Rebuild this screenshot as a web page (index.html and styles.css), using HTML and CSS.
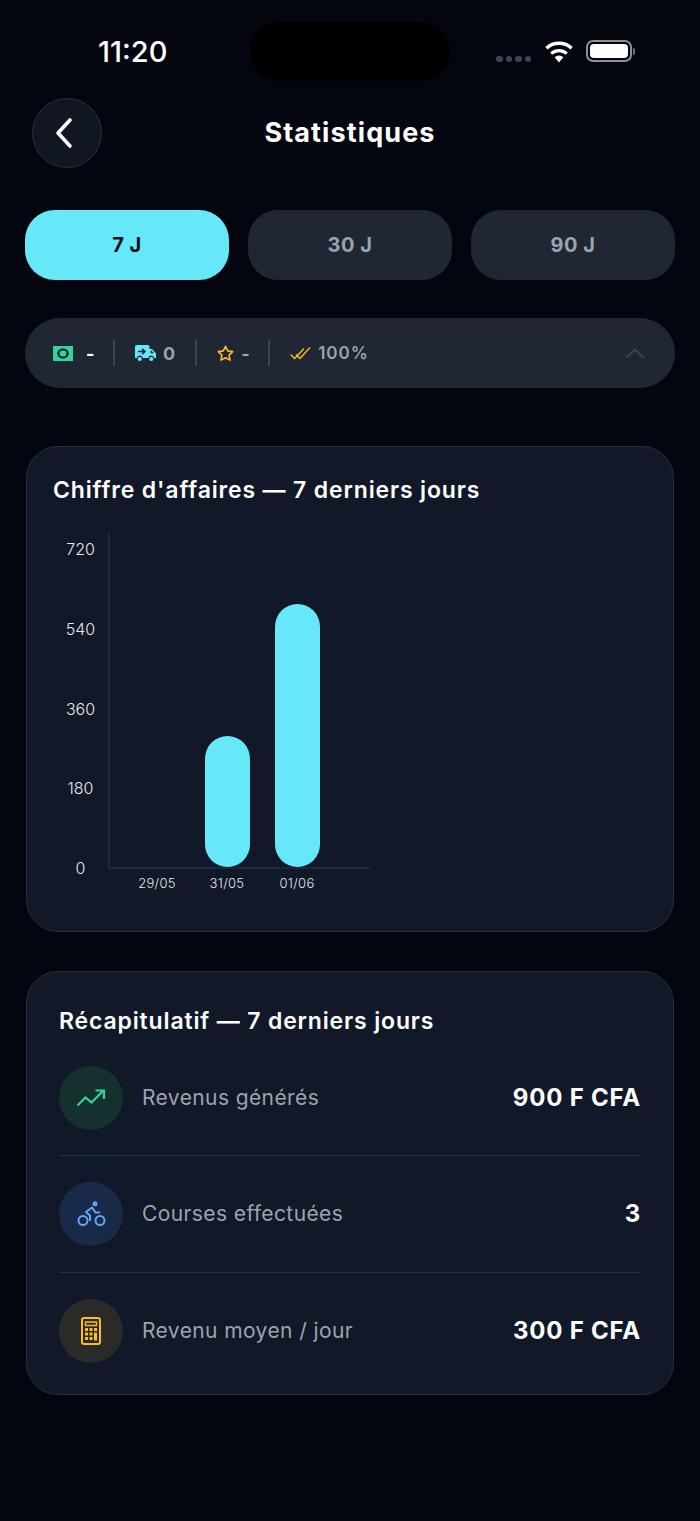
FILE: index.html
```html
<!DOCTYPE html>
<html lang="fr">
<head>
    <meta charset="UTF-8">
    <meta name="viewport" content="width=device-width, initial-scale=1.0">
    <title>Statistiques</title>
    <link rel="stylesheet" href="styles.css">
</head>
<body>
    <div class="status-bar">
        <span class="status-time">11:20</span>
        <div class="status-island"></div>
        <div class="status-icons">
            <div class="signal-dots"><i></i><i></i><i></i><i></i></div>
            <svg class="wifi" width="30" height="23" viewBox="0 0 30 23">
                <path d="M15 22.5 10.6 17.3a6.6 6.6 0 0 1 8.8 0Z" fill="#fff"/>
                <path d="M7.2 13.6a11.6 11.6 0 0 1 15.6 0" fill="none" stroke="#fff" stroke-width="3.2"/>
                <path d="M2.4 8.2a18.6 18.6 0 0 1 25.2 0" fill="none" stroke="#fff" stroke-width="3.4"/>
            </svg>
            <div class="battery"><div class="battery-fill"></div></div>
            <div class="battery-cap"></div>
        </div>
    </div>

    <div class="header">
        <button class="back-btn">
            <svg width="24" height="34" viewBox="0 0 24 34"><path d="M17 4 5 17l12 13" fill="none" stroke="#fff" stroke-width="3.6" stroke-linecap="round" stroke-linejoin="round"/></svg>
        </button>
        <h1>Statistiques</h1>
    </div>

    <div class="tabs">
        <div class="tab active">7 J</div>
        <div class="tab">30 J</div>
        <div class="tab">90 J</div>
    </div>

    <div class="summary">
        <div class="summary-item money">
            <svg width="20" height="15" viewBox="0 0 20 15"><path fill-rule="evenodd" d="M0 0h20v15H0Zm10 2.500c-3 0-5.800 2.200-5.800 5s2.800 5 5.800 5 5.800-2.200 5.800-5-2.800-5-5.800-5Z" fill="#34d399"/><ellipse cx="10" cy="7.500" rx="3.400" ry="3" fill="#34d399"/></svg>
            <span class="val-white">-</span>
        </div>
        <div class="summary-sep"></div>
        <div class="summary-item">
            <svg width="21" height="17" viewBox="0 0 21 17"><path d="M2 0h11a2 2 0 0 1 1.500 1.500V4H17l4 4.500V13h-1.800a3 3 0 0 0-5.900 0H7.700a3 3 0 0 0-5.900 0H0V2a2 2 0 0 1 2-2Z" fill="#67e8f9"/><path d="M3 6.500h6M7 3.800l3 2.700-3 2.700" fill="none" stroke="#1e2733" stroke-width="1.600"/><path d="M15.500 5.800h1.200l2.200 2.500h-3.400Z" fill="#1e2733"/><circle cx="4.700" cy="14" r="2.100" fill="#67e8f9"/><circle cx="16.300" cy="14" r="2.100" fill="#67e8f9"/></svg>
            <span>0</span>
        </div>
        <div class="summary-sep"></div>
        <div class="summary-item">
            <svg width="17" height="17" viewBox="0 0 17 17"><path d="m8.500 1.300 2.200 4.600 5 .7-3.600 3.500.9 5-4.500-2.400L4 15.100l.9-5L1.300 6.600l5-.7Z" fill="none" stroke="#fbbf24" stroke-width="1.600" stroke-linejoin="round"/></svg>
            <span class="val-dash">-</span>
        </div>
        <div class="summary-sep"></div>
        <div class="summary-item check">
            <svg width="21" height="14" viewBox="0 0 21 14"><path d="m.7 8.500 4 4L14 2.500M6 8.500l4 4L20 1.500" fill="none" stroke="#fbbf24" stroke-width="1.400"/></svg>
            <span>100%</span>
        </div>
        <svg class="chevron" width="20" height="12" viewBox="0 0 20 12"><path d="m1.500 10.500 8.500-8 8.500 8" fill="none" stroke="#3a4452" stroke-width="2"/></svg>
    </div>

    <div class="card chart-card">
        <h2>Chiffre d'affaires — 7 derniers jours</h2>
        <div class="chart">
            <div class="y-axis">
                <span>720</span>
                <span>540</span>
                <span>360</span>
                <span>180</span>
                <span>0</span>
            </div>
            <div class="chart-right">
                <div class="plot">
                    <div class="slot"></div>
                    <div class="slot"><div class="bar" style="height: 131px"></div></div>
                    <div class="slot"><div class="bar" style="height: 263px"></div></div>
                </div>
                <div class="x-axis">
                    <span>29/05</span>
                    <span>31/05</span>
                    <span>01/06</span>
                </div>
            </div>
        </div>
    </div>

    <div class="card recap-card">
        <h2>Récapitulatif — 7 derniers jours</h2>
        <div class="recap-row">
            <div class="recap-icon green">
                <svg width="30" height="20" viewBox="0 0 30 20"><path d="M1.500 17.500 9.500 9.500l6 5L27 3" fill="none" stroke="#34d399" stroke-width="2.200"/><path d="M19.500 2.500H28V11" fill="none" stroke="#34d399" stroke-width="2.200"/></svg>
            </div>
            <span class="recap-label">Revenus générés</span>
            <span class="recap-value">900 F CFA</span>
        </div>
        <div class="recap-row">
            <div class="recap-icon blue">
                <svg width="29" height="26" viewBox="0 0 29 26"><g fill="none" stroke="#60a5fa" stroke-width="2"><circle cx="6" cy="19.500" r="4.500"/><circle cx="23" cy="19.500" r="4.500"/><path d="M13 20v-5.500L9 11l6-4.500 3.500 5H23" stroke-linejoin="round"/></g><circle cx="18" cy="2.800" r="2.500" fill="#60a5fa"/></svg>
            </div>
            <span class="recap-label">Courses effectuées</span>
            <span class="recap-value">3</span>
        </div>
        <div class="recap-row">
            <div class="recap-icon yellow">
                <svg width="20" height="28" viewBox="0 0 20 28">
                    <rect x="1" y="1" width="18" height="26" rx="2" fill="none" stroke="#fbbf24" stroke-width="2"/>
                    <rect x="4.500" y="5" width="11" height="3.500" fill="none" stroke="#fbbf24" stroke-width="1.500"/>
                    <g fill="#fbbf24">
                        <rect x="4" y="11" width="3" height="3"/><rect x="8.500" y="11" width="3" height="3"/><rect x="13" y="11" width="3" height="3"/>
                        <rect x="4" y="15.500" width="3" height="3"/><rect x="8.500" y="15.500" width="3" height="3"/><rect x="13" y="15.500" width="3" height="8"/>
                        <rect x="4" y="20" width="3" height="3"/><rect x="8.500" y="20" width="3" height="3"/>
                    </g>
                </svg>
            </div>
            <span class="recap-label">Revenu moyen / jour</span>
            <span class="recap-value">300 F CFA</span>
        </div>
    </div>
</body>
</html>
```

FILE: styles.css
```css
* {
    margin: 0;
    padding: 0;
    box-sizing: border-box;
    font-family: Inter, 'Noto Sans', sans-serif;
}

body {
    background-color: #03060f;
    color: white;
    width: 700px;
    height: 1521px;
    overflow: hidden;
    padding: 0 25px;
}

.status-bar {
    height: 98px;
    padding: 22px 40px 0 73px;
    display: flex;
    align-items: flex-start;
}

.status-time {
    font-size: 29px;
    font-weight: 500;
    line-height: 60px;
    width: 152px;
}

.status-island {
    width: 200px;
    height: 59px;
    background-color: #000;
    border-radius: 30px;
}

.status-icons {
    display: flex;
    align-items: center;
    margin-left: auto;
    height: 58px;
}

.signal-dots {
    display: flex;
    gap: 3px;
    margin: 16px 13px 0 0;
}

.signal-dots i {
    width: 6.500px;
    height: 6.500px;
    border-radius: 50%;
    background-color: #3f4550;
}

.wifi {
    margin-right: 12px;
}

.battery {
    width: 46px;
    height: 22px;
    border: 2px solid #8c9099;
    border-radius: 7px;
    padding: 2px;
}

.battery-fill {
    height: 100%;
    background-color: #fff;
    border-radius: 4px;
}

.battery-cap {
    width: 2px;
    height: 7px;
    margin-left: 1px;
    background-color: #6b7079;
    border-radius: 0 2px 2px 0;
}

.header {
    display: grid;
    grid-template-columns: 70px 1fr 70px;
    align-items: center;
    height: 70px;
    padding: 0 7px;
    margin-bottom: 42px;
}

.back-btn {
    width: 70px;
    height: 70px;
    border-radius: 50%;
    background-color: #111722;
    border: 1px solid #2a313d;
    display: flex;
    align-items: center;
    justify-content: center;
    padding-right: 4px;
}

.header h1 {
    font-size: 27px;
    font-weight: 700;
    letter-spacing: 1.100px;
    text-align: center;
    padding-bottom: 2px;
}

.tabs {
    display: grid;
    grid-template-columns: repeat(3, 204px);
    justify-content: space-between;
    margin-bottom: 38px;
}

.tab {
    height: 70px;
    border-radius: 30px;
    background-color: #1e2733;
    color: #9ca3af;
    font-size: 20px;
    font-weight: 700;
    letter-spacing: 0.5px;
    display: flex;
    align-items: center;
    justify-content: center;
}

.tab.active {
    background-color: #67e8f9;
    color: #0b1120;
}

.summary {
    height: 70px;
    border-radius: 35px;
    background-color: #1e2733;
    padding: 0 30px 0 28px;
    margin-bottom: 58px;
    display: flex;
    align-items: center;
    gap: 20px;
}

.summary-sep {
    width: 2px;
    height: 26px;
    background-color: #3a4452;
}

.summary-item {
    display: flex;
    align-items: center;
    gap: 7px;
    color: #9ca3af;
    font-size: 18px;
    font-weight: 700;
}

.summary-item.money {
    gap: 13px;
}

.summary-item .val-white {
    color: #fff;
    width: 7px;
}

.summary-item .val-dash {
    width: 7px;
}

.summary-item.check span {
    font-size: 17px;
    font-weight: 600;
    letter-spacing: 1px;
}

.chevron {
    margin-left: auto;
}

.card {
    background-color: #111827;
    border: 1px solid #262f3d;
    border-radius: 32px;
    margin: 0 1px;
}

.card h2 {
    font-size: 23px;
    font-weight: 600;
    letter-spacing: 0.850px;
    line-height: 28px;
}

.chart-card {
    height: 486px;
    padding: 29px 26px 0;
    margin-bottom: 39px;
}

.chart {
    display: flex;
    margin-top: 29px;
}

.y-axis {
    width: 55px;
    height: 344px;
    padding-top: 7px;
    display: flex;
    flex-direction: column;
    justify-content: space-between;
    align-items: center;
    font-size: 16px;
    font-weight: 300;
    color: #e5e7eb;
    line-height: 18px;
}

.plot {
    width: 262px;
    height: 336px;
    border-left: 2px solid #1f2836;
    border-bottom: 2px solid #1f2836;
    padding-left: 12px;
    display: flex;
    align-items: flex-end;
}

.slot {
    width: 70px;
    display: flex;
    justify-content: center;
}

.bar {
    width: 45px;
    background-color: #67e8f9;
    border-radius: 23px;
}

.x-axis {
    display: flex;
    padding-left: 14px;
    margin-top: 6px;
    font-size: 13px;
    font-weight: 300;
    letter-spacing: 0.3px;
    color: #e5e7eb;
    line-height: 16px;
}

.x-axis span {
    width: 70px;
    text-align: center;
}

.recap-card {
    height: 424px;
    padding: 35px 32px 0;
}

.recap-card h2 {
    margin-bottom: 5px;
}

.recap-row {
    height: 116.300px;
    display: flex;
    align-items: center;
    gap: 19px;
    border-bottom: 1px solid #262f3d;
}

.recap-row:last-child {
    border-bottom: none;
}

.recap-icon {
    width: 64px;
    height: 64px;
    border-radius: 50%;
    display: flex;
    align-items: center;
    justify-content: center;
}

.recap-icon.green {
    background-color: #14302f;
}

.recap-icon.blue {
    background-color: #182a47;
}

.recap-icon.yellow {
    background-color: #2a2a28;
}

.recap-label {
    color: #9ca3af;
    font-size: 21px;
    letter-spacing: 0.4px;
}

.recap-value {
    margin-left: auto;
    font-size: 24px;
    font-weight: 700;
    letter-spacing: 0.800px;
}
```
